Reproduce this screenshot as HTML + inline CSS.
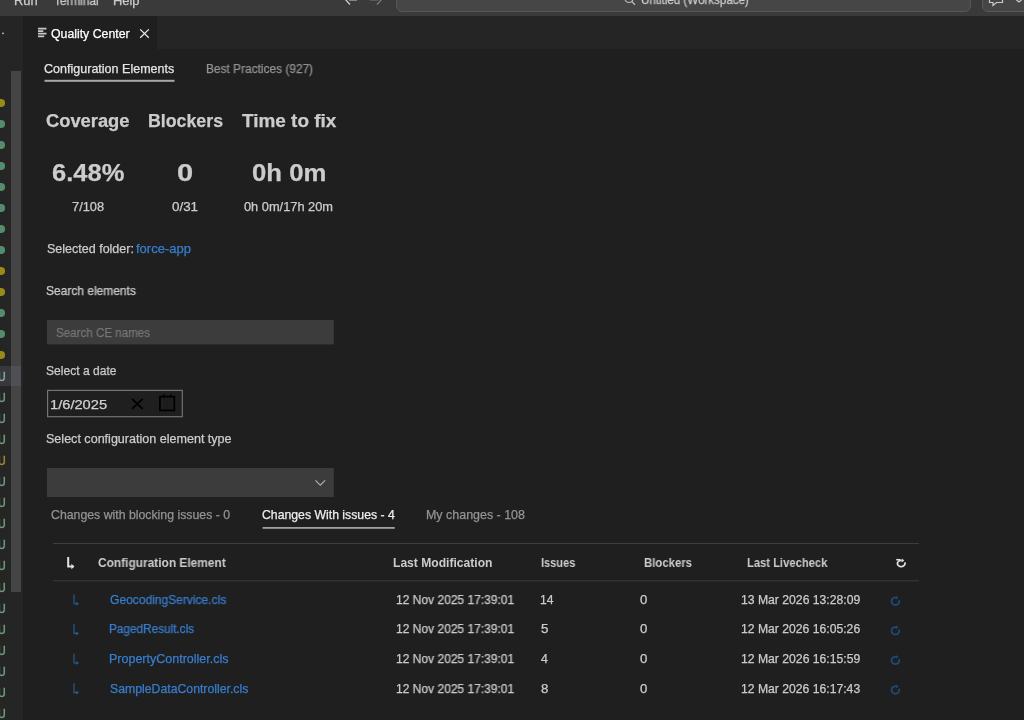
<!DOCTYPE html>
<html><head><meta charset="utf-8"><title>Quality Center</title>
<style>
html,body{margin:0;padding:0;}
body{width:1024px;height:720px;overflow:hidden;background:#1f1f1f;position:relative;font-family:"Liberation Sans",sans-serif;}
.a{position:absolute;}
.t{position:absolute;will-change:transform;-webkit-text-stroke:0.25px;white-space:pre;transform-origin:0 0;line-height:normal;}
#titlebar{left:0;top:0;width:1024px;height:16px;background:#3a3a3a;overflow:hidden;}
#tabbar{left:0;top:16px;width:1024px;height:33.3px;background:#252526;}
#sidebar{left:0;top:16px;width:22.5px;height:704px;background:#252526;overflow:hidden;}
#tab{left:22.5px;top:16px;width:134px;height:34px;background:#1f1f1f;}
.dot{position:absolute;left:-3.3px;width:8.6px;height:8px;border-radius:50%;}
.g{background:#558c6e;}.y{background:#9a8a1a;}
.th{-webkit-text-stroke:0 !important;}
.u{position:absolute;left:-2.9px;font-size:12.1px;font-weight:400;line-height:normal;will-change:transform;-webkit-text-stroke:0.3px;transform:scaleX(0.93);transform-origin:100% 0;}
</style></head><body>
<div class="a" id="tabbar"></div>
<div class="a" id="tab"></div>
<div class="a" id="sidebar">
<div class="a" style="left:0;top:350.0px;width:21.1px;height:19.5px;background:#37373d"></div>
<div class="dot y" style="top:82.6px"></div>
<div class="dot g" style="top:103.7px"></div>
<div class="dot g" style="top:124.7px"></div>
<div class="dot g" style="top:145.8px"></div>
<div class="dot g" style="top:166.9px"></div>
<div class="dot g" style="top:187.9px"></div>
<div class="dot g" style="top:209.0px"></div>
<div class="dot g" style="top:230.1px"></div>
<div class="dot y" style="top:251.2px"></div>
<div class="dot y" style="top:272.2px"></div>
<div class="dot g" style="top:293.3px"></div>
<div class="dot g" style="top:314.4px"></div>
<div class="dot y" style="top:335.4px"></div>
<span class="u" style="top:353.8px;color:#8dbb9c">U</span>
<span class="u" style="top:374.8px;color:#79aa88">U</span>
<span class="u" style="top:395.9px;color:#79aa88">U</span>
<span class="u" style="top:417.0px;color:#79aa88">U</span>
<span class="u" style="top:438.0px;color:#a89a32">U</span>
<span class="u" style="top:459.1px;color:#79aa88">U</span>
<span class="u" style="top:480.2px;color:#79aa88">U</span>
<span class="u" style="top:501.2px;color:#79aa88">U</span>
<span class="u" style="top:522.3px;color:#79aa88">U</span>
<span class="u" style="top:543.4px;color:#79aa88">U</span>
<span class="u" style="top:564.5px;color:#79aa88">U</span>
<span class="u" style="top:585.5px;color:#79aa88">U</span>
<span class="u" style="top:606.6px;color:#79aa88">U</span>
<span class="u" style="top:627.7px;color:#79aa88">U</span>
<span class="u" style="top:648.7px;color:#79aa88">U</span>
<span class="u" style="top:669.8px;color:#79aa88">U</span>
<span class="u" style="top:690.9px;color:#79aa88">U</span>
<div class="a" style="left:11.3px;top:55px;width:9.8px;height:520.7px;background:rgba(125,125,125,0.37);"></div>
</div>
<div class="a" id="titlebar">
<div class="a" style="left:395.5px;top:-14px;width:573px;height:24px;background:#464646;border:1px solid #575757;border-radius:6px;box-sizing:content-box;"></div>
<div class="a" style="left:982px;top:-14px;width:60px;height:24px;background:#464646;border:1px solid #5a5a5a;border-radius:6px;"></div>
<svg class="a" style="left:0;top:0" width="1024" height="16" viewBox="0 0 1024 16" fill="none">
<path d="M345 -1 L350 4.5 M349 -0.2 H357" stroke="#cccccc" stroke-width="1.3"/>
<path d="M382 -1 L377 4.5 M378 -0.2 H370" stroke="#7a7a7a" stroke-width="1.3"/>
<circle cx="629" cy="-1.5" r="4" stroke="#bbbbbb" stroke-width="1.2"/>
<path d="M631.8 1.5 L635 4.7" stroke="#bbbbbb" stroke-width="1.3"/>
<path d="M989.5 -2 V2.5 H993 V5.5 L996.5 2.5 H1002.5 V-2" stroke="#cccccc" stroke-width="1.2"/>
<path d="M1015.5 -1 L1019 2 L1022.5 -1" stroke="#cccccc" stroke-width="1.2"/>
</svg>
</div>
<!-- tab icon + close -->
<svg class="a" style="left:0;top:0" width="1024" height="720" viewBox="0 0 1024 720" fill="none">
<circle cx="3" cy="33.3" r="0.9" fill="#cccccc"/>
<g stroke="#c8c8c8" stroke-width="1.7">
<path d="M38 28.6H46.5M38 31.2H43.3M38 33.7H46.5M38 36.3H44.2"/>
</g>
<path d="M140.2 29.4L148.8 37.8M148.8 29.4L140.2 37.8" stroke="#e8e8e8" stroke-width="1.3"/>
<!-- subtab underline -->
<rect x="44.5" y="79.8" width="130" height="2" fill="#a8a8a8"/>
<!-- search input -->
<rect x="47" y="320" width="286.8" height="24.4" fill="#3c3c3c"/>
<!-- date input -->
<rect x="47.6" y="390.4" width="134.7" height="26.3" fill="#1f1f1f" stroke="#747474" stroke-width="1.2"/>
<path d="M132 398.9L142.6 408.8M142.6 398.9L132 408.8" stroke="#000" stroke-width="1.8"/>
<path d="M159.9 396.7H174.3V410.3H159.9Z" stroke="#000" stroke-width="1.8"/><path d="M163.7 394.3V397.5M170.9 394.3V397.5" stroke="#000" stroke-width="1.6"/><path d="M164.5 398V409M167.2 398V409M170 398V409" stroke="#191919" stroke-width="0.8"/>
<!-- select -->
<rect x="47" y="468" width="286.8" height="29" fill="#3c3c3c"/>
<path d="M315.5 480.3L320.3 485.1L325.1 480.3" stroke="#b0b0b0" stroke-width="1.2"/>
<!-- tab2 underline -->
<rect x="262.6" y="527" width="132.2" height="1.8" fill="#a0a0a0"/>
<!-- table lines -->
<rect x="53" y="543" width="866" height="1" fill="#3d3d3d"/>
<rect x="53" y="580.3" width="866" height="1" fill="#3d3d3d"/>
<path d="M68.2 557V566.5H73.3" stroke="#e2e2e2" stroke-width="2.0" fill="none"/><path d="M71.39999999999999 563.86L74.39999999999999 566.5L71.39999999999999 569.14Z" fill="#e2e2e2"/>
<path d="M74 594.4V603.8H77.7" stroke="#275f96" stroke-width="1.1" fill="none"/><path d="M76.4 601.8199999999999L78.8 603.8L76.4 605.78Z" fill="#275f96"/>
<path d="M74 624.0V633.4H77.7" stroke="#275f96" stroke-width="1.1" fill="none"/><path d="M76.4 631.42L78.8 633.4L76.4 635.38Z" fill="#275f96"/>
<path d="M74 653.6V663.0H77.7" stroke="#275f96" stroke-width="1.1" fill="none"/><path d="M76.4 661.02L78.8 663.0L76.4 664.98Z" fill="#275f96"/>
<path d="M74 683.1999999999999V692.5999999999999H77.7" stroke="#275f96" stroke-width="1.1" fill="none"/><path d="M76.4 690.6199999999999L78.8 692.5999999999999L76.4 694.5799999999999Z" fill="#275f96"/>
<path d="M904.77 562.44A3.8 3.1 0 1 1 901.86 560.45" stroke="#e0e0e0" stroke-width="1.8" fill="none"/><path d="M902.21 558.48L904.22 560.86L901.51 562.42Z" fill="#e0e0e0"/>
<path d="M896.2 559.7H900.5" stroke="#e0e0e0" stroke-width="1.5"/>
<path d="M899.06 599.93A3.9 3.7 0 1 1 896.08 597.56" stroke="#1e4e7e" stroke-width="1.6" fill="none"/><path d="M896.41 595.69L898.32 597.95L895.75 599.43Z" fill="#1e4e7e"/>
<path d="M899.06 629.53A3.9 3.7 0 1 1 896.08 627.16" stroke="#1e4e7e" stroke-width="1.6" fill="none"/><path d="M896.41 625.29L898.32 627.55L895.75 629.03Z" fill="#1e4e7e"/>
<path d="M899.06 659.13A3.9 3.7 0 1 1 896.08 656.76" stroke="#1e4e7e" stroke-width="1.6" fill="none"/><path d="M896.41 654.89L898.32 657.15L895.75 658.63Z" fill="#1e4e7e"/>
<path d="M899.06 688.73A3.9 3.7 0 1 1 896.08 686.36" stroke="#1e4e7e" stroke-width="1.6" fill="none"/><path d="M896.41 684.49L898.32 686.75L895.75 688.23Z" fill="#1e4e7e"/>
</svg>
<span class="t tb" style="left:13.77px;top:-6.5px;font-size:12.1px;font-weight:400;color:#cccccc;transform:scaleX(1.0689)">Run</span>
<span class="t tb" style="left:53.66px;top:-6.5px;font-size:12.1px;font-weight:400;color:#cccccc;transform:scaleX(0.9792)">Terminal</span>
<span class="t tb" style="left:112.72px;top:-6.5px;font-size:12.1px;font-weight:400;color:#cccccc;transform:scaleX(1.0675)">Help</span>
<span class="t tb" style="left:640.53px;top:-6.9px;font-size:12px;font-weight:400;color:#cccccc;transform:scaleX(0.9644)">Untitled (Workspace)</span>
<span class="t " style="left:51.25px;top:27.0px;font-size:12.1px;font-weight:400;color:#ffffff;transform:scaleX(1.0165)">Quality Center</span>
<span class="t " style="left:44.07px;top:61.5px;font-size:12.1px;font-weight:400;color:#e4e4e4;transform:scaleX(1.0365)">Configuration Elements</span>
<span class="t " style="left:205.55px;top:61.5px;font-size:12.1px;font-weight:400;color:#939393;transform:scaleX(0.9835)">Best Practices (927)</span>
<span class="t " style="left:46.27px;top:111.2px;font-size:17.5px;font-weight:700;color:#cccccc;transform:scaleX(1.0470)">Coverage</span>
<span class="t " style="left:147.60px;top:111.2px;font-size:17.5px;font-weight:700;color:#cccccc;transform:scaleX(1.0151)">Blockers</span>
<span class="t " style="left:241.81px;top:111.2px;font-size:17.5px;font-weight:700;color:#cccccc;transform:scaleX(1.0816)">Time to fix</span>
<span class="t " style="left:51.91px;top:159.1px;font-size:24px;font-weight:700;color:#cccccc;transform:scaleX(1.0626)">6.48%</span>
<span class="t " style="left:177.38px;top:159.1px;font-size:24px;font-weight:700;color:#cccccc;transform:scaleX(1.2113)">0</span>
<span class="t " style="left:251.60px;top:159.1px;font-size:24px;font-weight:700;color:#cccccc;transform:scaleX(1.0715)">0h 0m</span>
<span class="t " style="left:72.16px;top:199.5px;font-size:12.1px;font-weight:400;color:#cccccc;transform:scaleX(1.0608)">7/108</span>
<span class="t " style="left:171.53px;top:199.5px;font-size:12.1px;font-weight:400;color:#cccccc;transform:scaleX(1.1078)">0/31</span>
<span class="t " style="left:244.25px;top:199.5px;font-size:12.1px;font-weight:400;color:#cccccc;transform:scaleX(1.0592)">0h 0m/17h 20m</span>
<span class="t " style="left:46.64px;top:241.5px;font-size:12.1px;font-weight:400;color:#cccccc;transform:scaleX(1.0343)">Selected folder:</span>
<span class="t " style="left:135.87px;top:241.5px;font-size:12.1px;font-weight:400;color:#387dcd;transform:scaleX(1.0753)">force-app</span>
<span class="t " style="left:46.46px;top:283.7px;font-size:12.1px;font-weight:400;color:#cccccc;transform:scaleX(0.9908)">Search elements</span>
<span class="t " style="left:55.98px;top:326.0px;font-size:12.1px;font-weight:400;color:#757575;transform:scaleX(0.9586)">Search CE names</span>
<span class="t " style="left:46.46px;top:363.5px;font-size:12.1px;font-weight:400;color:#cccccc;transform:scaleX(0.9987)">Select a date</span>
<span class="t " style="left:50.20px;top:398.0px;font-size:12.1px;font-weight:400;color:#d0d0d0;transform:scaleX(1.2124)">1/6/2025</span>
<span class="t " style="left:46.43px;top:432.0px;font-size:12.1px;font-weight:400;color:#cccccc;transform:scaleX(1.0378)">Select configuration element type</span>
<span class="t " style="left:51.28px;top:507.8px;font-size:12.1px;font-weight:400;color:#939393;transform:scaleX(1.0167)">Changes with blocking issues - 0</span>
<span class="t " style="left:262.19px;top:507.8px;font-size:12.1px;font-weight:400;color:#ededed;transform:scaleX(1.0129)">Changes With issues - 4</span>
<span class="t " style="left:425.90px;top:507.8px;font-size:12.1px;font-weight:400;color:#939393;transform:scaleX(1.0294)">My changes - 108</span>
<span class="t th" style="left:98.42px;top:555.8px;font-size:12.1px;font-weight:700;color:#cccccc;transform:scaleX(0.9848)">Configuration Element</span>
<span class="t th" style="left:393.22px;top:555.8px;font-size:12.1px;font-weight:700;color:#cccccc;transform:scaleX(0.9973)">Last Modification</span>
<span class="t th" style="left:541.08px;top:555.8px;font-size:12.1px;font-weight:700;color:#cccccc;transform:scaleX(0.9109)">Issues</span>
<span class="t th" style="left:644.26px;top:555.8px;font-size:12.1px;font-weight:700;color:#cccccc;transform:scaleX(0.9400)">Blockers</span>
<span class="t th" style="left:747.37px;top:555.8px;font-size:12.1px;font-weight:700;color:#cccccc;transform:scaleX(0.9265)">Last Livecheck</span>
<span class="t " style="left:109.70px;top:592.7px;font-size:12.1px;font-weight:400;color:#387dcd;transform:scaleX(0.9940)">GeocodingService.cls</span>
<span class="t " style="left:396.40px;top:592.7px;font-size:12.1px;font-weight:400;color:#cccccc;transform:scaleX(0.9931)">12 Nov 2025 17:39:01</span>
<span class="t " style="left:540.30px;top:592.7px;font-size:12.1px;font-weight:400;color:#cccccc;transform:scaleX(0.9971)">14</span>
<span class="t " style="left:640.44px;top:592.7px;font-size:12.1px;font-weight:400;color:#cccccc;transform:scaleX(1.0906)">0</span>
<span class="t " style="left:740.99px;top:592.7px;font-size:12.1px;font-weight:400;color:#cccccc;transform:scaleX(1.0074)">13 Mar 2026 13:28:09</span>
<span class="t " style="left:109.36px;top:622.3px;font-size:12.1px;font-weight:400;color:#387dcd;transform:scaleX(0.9739)">PagedResult.cls</span>
<span class="t " style="left:396.40px;top:622.3px;font-size:12.1px;font-weight:400;color:#cccccc;transform:scaleX(0.9931)">12 Nov 2025 17:39:01</span>
<span class="t " style="left:540.67px;top:622.3px;font-size:12.1px;font-weight:400;color:#cccccc;transform:scaleX(1.0961)">5</span>
<span class="t " style="left:640.44px;top:622.3px;font-size:12.1px;font-weight:400;color:#cccccc;transform:scaleX(1.0906)">0</span>
<span class="t " style="left:740.99px;top:622.3px;font-size:12.1px;font-weight:400;color:#cccccc;transform:scaleX(1.0069)">12 Mar 2026 16:05:26</span>
<span class="t " style="left:109.30px;top:651.9px;font-size:12.1px;font-weight:400;color:#387dcd;transform:scaleX(1.0335)">PropertyController.cls</span>
<span class="t " style="left:396.40px;top:651.9px;font-size:12.1px;font-weight:400;color:#cccccc;transform:scaleX(0.9931)">12 Nov 2025 17:39:01</span>
<span class="t " style="left:540.95px;top:651.9px;font-size:12.1px;font-weight:400;color:#cccccc;transform:scaleX(1.0209)">4</span>
<span class="t " style="left:640.44px;top:651.9px;font-size:12.1px;font-weight:400;color:#cccccc;transform:scaleX(1.0906)">0</span>
<span class="t " style="left:740.99px;top:651.9px;font-size:12.1px;font-weight:400;color:#cccccc;transform:scaleX(1.0074)">12 Mar 2026 16:15:59</span>
<span class="t " style="left:109.75px;top:681.5px;font-size:12.1px;font-weight:400;color:#387dcd;transform:scaleX(1.0136)">SampleDataController.cls</span>
<span class="t " style="left:396.40px;top:681.5px;font-size:12.1px;font-weight:400;color:#cccccc;transform:scaleX(0.9931)">12 Nov 2025 17:39:01</span>
<span class="t " style="left:540.67px;top:681.5px;font-size:12.1px;font-weight:400;color:#cccccc;transform:scaleX(1.0961)">8</span>
<span class="t " style="left:640.44px;top:681.5px;font-size:12.1px;font-weight:400;color:#cccccc;transform:scaleX(1.0906)">0</span>
<span class="t " style="left:740.99px;top:681.5px;font-size:12.1px;font-weight:400;color:#cccccc;transform:scaleX(1.0069)">12 Mar 2026 16:17:43</span>
</body></html>
